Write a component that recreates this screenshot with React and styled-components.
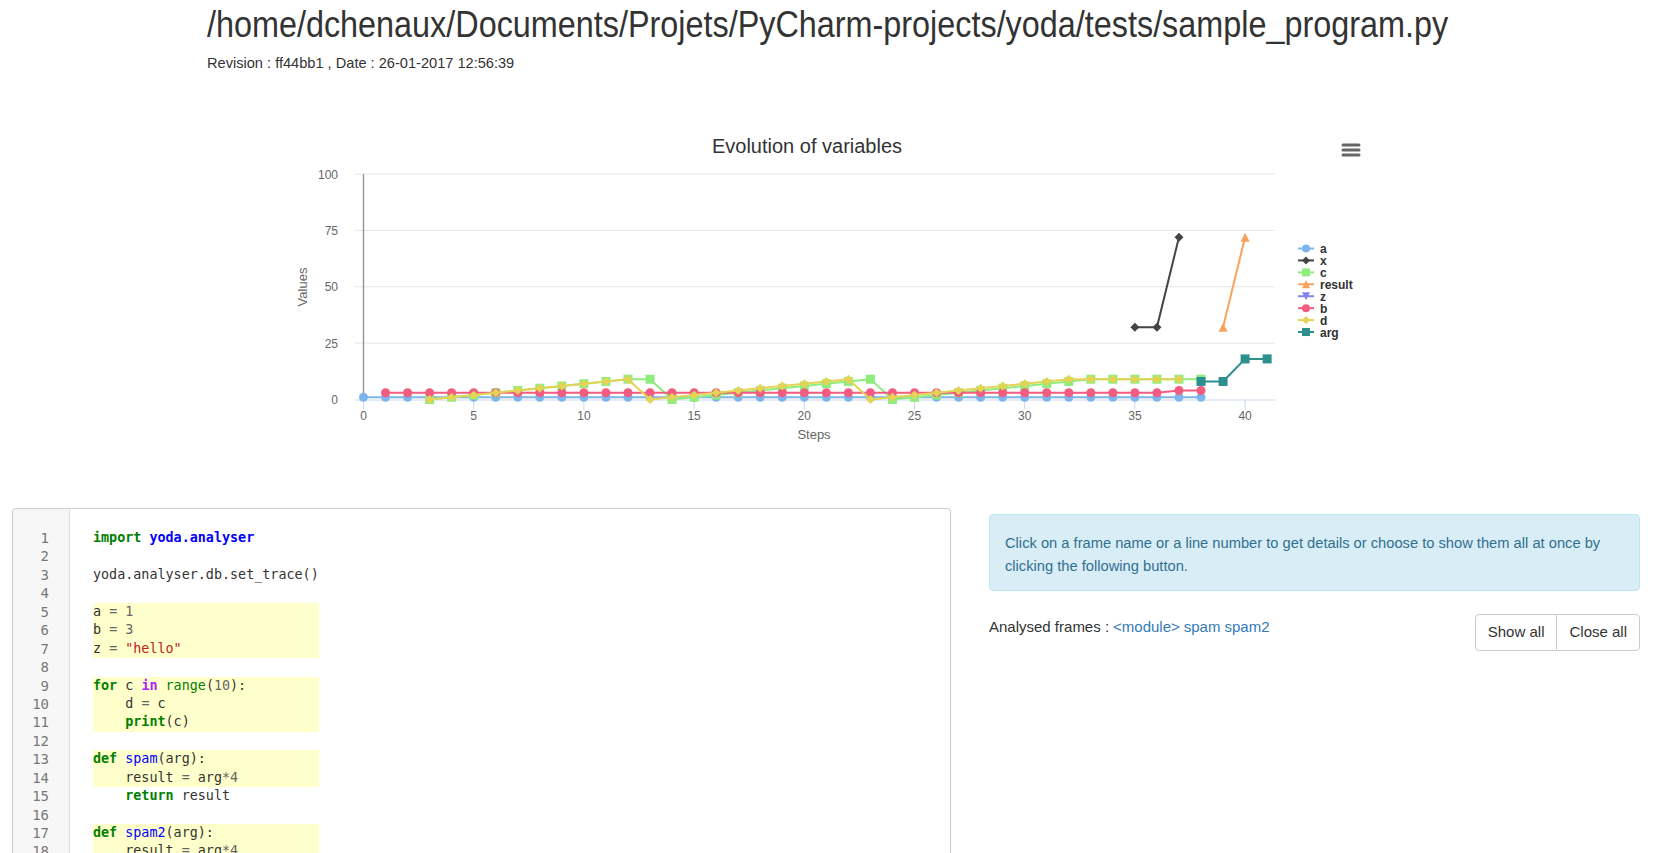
import React from 'react';
import styled, { createGlobalStyle } from 'styled-components';

const GlobalStyle = createGlobalStyle`
  html, body {
    margin: 0;
    padding: 0;
    overflow: hidden;
    background: #fff;
  }
  body {
    font-family: "Liberation Sans", Arial, sans-serif;
    font-size: 15px;
    line-height: 1.5;
    color: #333;
  }
`;

const Page = styled.div`
  width: 1658px;
`;

const Header = styled.header`
  padding: 3px 0 0 207px;
`;

// the original title face is a condensed sans, squeeze the regular one to the same width
const Title = styled.h1`
  display: inline-block;
  margin: 0;
  font-size: 37.5px;
  line-height: 42px;
  font-weight: 400;
  white-space: nowrap;
  color: #333;
  transform: scaleX(0.863);
  transform-origin: left center;
`;

const Revision = styled.p`
  margin: 8px 0 0;
  font-size: 14.6px;
  line-height: 20px;
`;

const ChartWrap = styled.div`
  margin-top: 37px;
  padding-left: 242px;
  height: 350px;
  svg {
    display: block;
    font-family: "Liberation Sans", Arial, sans-serif;
  }
`;

const Columns = styled.div`
  display: flex;
  align-items: flex-start;
  margin-top: 48px;
  padding: 0 18px 0 12px;
`;

const CodeBox = styled.div`
  display: flex;
  width: 939px;
  box-sizing: border-box;
  border: 1px solid #ccc;
  border-bottom: none;
  border-radius: 4px 4px 0 0;
  background: #fff;
  font-family: "DejaVu Sans Mono", monospace;
  font-size: 13.4px;
  line-height: 18.45px;
`;

const Gutter = styled.div`
  width: 57px;
  box-sizing: border-box;
  padding: 20px 20px 40px 0;
  background: #f7f7f7;
  border-right: 1px solid #ddd;
  border-radius: 4px 0 0 0;
  text-align: right;
  font-size: 14px;
  color: #777;
`;

const LineNo = styled.div`
  height: 18.45px;
`;

const Source = styled.div`
  padding: 20px 20px 40px 23px;
`;

const Pre = styled.div`
  display: inline-block;
  white-space: pre;
  color: #333;
`;

const Line = styled.div`
  height: 18.45px;
  background: ${(p) => (p.$hl ? '#ffffcc' : 'transparent')};
`;

const tokenStyles = {
  k: 'color: #008000; font-weight: bold;',
  nn: 'color: #0000ff; font-weight: bold;',
  ow: 'color: #aa22ff; font-weight: bold;',
  nb: 'color: #008000;',
  nf: 'color: #0000ff;',
  mi: 'color: #666666;',
  o: 'color: #666666;',
  s: 'color: #ba2121;',
};

const Tok = styled.span`
  ${(p) => tokenStyles[p.$kind] || ''}
`;

const Side = styled.div`
  flex: 1;
  margin-left: 38px;
  margin-top: 6px;
`;

const Alert = styled.div`
  padding: 17px 15px 13px;
  border: 1px solid #bce8f1;
  border-radius: 4px;
  background: #d9edf7;
  color: #31708f;
  font-size: 14.7px;
  line-height: 22.5px;
`;

const FramesRow = styled.div`
  display: flex;
  justify-content: space-between;
  align-items: flex-start;
  margin-top: 23px;
`;

const Frames = styled.div`
  padding-top: 2px;
  a {
    color: #337ab7;
    text-decoration: none;
    margin-left: 4px;
  }
`;

const BtnGroup = styled.div`
  display: flex;
`;

const Btn = styled.button`
  font-family: "Liberation Sans", Arial, sans-serif;
  font-size: 15px;
  line-height: 22.5px;
  padding: 6px 12px;
  color: #333;
  background: #fff;
  border: 1px solid #ccc;
  border-radius: ${(p) => (p.$first ? '4px 0 0 4px' : '0 4px 4px 0')};
  margin-left: ${(p) => (p.$first ? '0' : '-1px')};
`;

// code listing, each line is a list of [kind, text] tokens
const code = [
  [['k', 'import'], ['', ' '], ['nn', 'yoda.analyser']],
  [],
  [['', 'yoda.analyser.db.set_trace()']],
  [],
  [['', 'a '], ['o', '='], ['', ' '], ['mi', '1']],
  [['', 'b '], ['o', '='], ['', ' '], ['mi', '3']],
  [['', 'z '], ['o', '='], ['', ' '], ['s', '"hello"']],
  [],
  [['k', 'for'], ['', ' c '], ['ow', 'in'], ['', ' '], ['nb', 'range'], ['', '('], ['mi', '10'], ['', '):']],
  [['', '    d '], ['o', '='], ['', ' c']],
  [['', '    '], ['k', 'print'], ['', '(c)']],
  [],
  [['k', 'def'], ['', ' '], ['nf', 'spam'], ['', '(arg):']],
  [['', '    result '], ['o', '='], ['', ' arg'], ['o', '*'], ['mi', '4']],
  [['', '    '], ['k', 'return'], ['', ' result']],
  [],
  [['k', 'def'], ['', ' '], ['nf', 'spam2'], ['', '(arg):']],
  [['', '    result '], ['o', '='], ['', ' arg'], ['o', '*'], ['mi', '4']],
  [['', '    '], ['k', 'return'], ['', ' result']],
  [],
  [['', 'x '], ['o', '='], ['', ' spam('], ['mi', '8'], ['', ')']],
  [['', 'x '], ['o', '='], ['', ' spam2(x'], ['o', '-'], ['mi', '14'], ['', ')']],
];

const highlighted = new Set([5, 6, 7, 9, 10, 11, 13, 14, 17, 18, 21, 22]);

// chart geometry (svg coordinates)
const X0 = 121.5;
const STEP = 22.04;
const Y0 = 289.5;
const UNIT = 2.255;
const px = (s) => X0 + s * STEP;
const py = (v) => Y0 - v * UNIT;

const range = (a, b) => Array.from({ length: b - a + 1 }, (_, i) => a + i);

const series = [
  { name: 'a', color: '#7cb5ec', symbol: 'circle', data: range(0, 38).map((s) => [s, 1]) },
  { name: 'x', color: '#434348', symbol: 'diamond', data: [[35, 32], [36, 32], [37, 72]] },
  {
    name: 'c',
    color: '#90ed7d',
    symbol: 'square',
    data: [
      ...range(3, 12).map((s) => [s, s - 3]),
      [13, 9],
      ...range(14, 23).map((s) => [s, s - 14]),
      ...range(24, 33).map((s) => [s, s - 24]),
      ...range(34, 38).map((s) => [s, 9]),
    ],
  },
  { name: 'result', color: '#f7a35c', symbol: 'triangle', data: [[39, 32], [40, 72]] },
  { name: 'z', color: '#8085e9', symbol: 'triangle-down', data: [] },
  {
    name: 'b',
    color: '#f15c80',
    symbol: 'circle',
    data: [...range(1, 36).map((s) => [s, 3]), [37, 4], [38, 4]],
  },
  {
    name: 'd',
    color: '#e4d354',
    symbol: 'diamond',
    data: [
      ...range(3, 12).map((s) => [s, s - 3]),
      ...range(13, 22).map((s) => [s, s - 13]),
      ...range(23, 32).map((s) => [s, s - 23]),
      ...range(33, 37).map((s) => [s, 9]),
    ],
  },
  { name: 'arg', color: '#2b908f', symbol: 'square', data: [[38, 8], [39, 8], [40, 18], [41, 18]] },
];

const Marker = ({ symbol, x, y, color, r = 4.5 }) => {
  if (symbol === 'circle') return <circle cx={x} cy={y} r={r} fill={color} />;
  if (symbol === 'square') return <rect x={x - r} y={y - r} width={r * 2} height={r * 2} fill={color} />;
  if (symbol === 'diamond')
    return <path d={`M${x} ${y - r}L${x + r} ${y}L${x} ${y + r}L${x - r} ${y}Z`} fill={color} />;
  if (symbol === 'triangle')
    return <path d={`M${x} ${y - r}L${x + r} ${y + r}L${x - r} ${y + r}Z`} fill={color} />;
  return <path d={`M${x - r} ${y - r}L${x + r} ${y - r}L${x} ${y + r}Z`} fill={color} />;
};

const Chart = () => (
  <svg width="1130" height="350" viewBox="0 0 1130 350">
    <text x="565" y="43" textAnchor="middle" fontSize="20" fill="#333">
      Evolution of variables
    </text>
    <g stroke="#666" strokeWidth="3" strokeLinecap="round">
      <line x1="1101" y1="35" x2="1117" y2="35" />
      <line x1="1101" y1="40" x2="1117" y2="40" />
      <line x1="1101" y1="45" x2="1117" y2="45" />
    </g>
    {[25, 50, 75, 100].map((v) => (
      <line key={v} x1="113" x2="1033" y1={py(v)} y2={py(v)} stroke="#e6e6e6" />
    ))}
    {[0, 25, 50, 75, 100].map((v) => (
      <text key={v} x="96" y={py(v) + 4.5} textAnchor="end" fontSize="12" fill="#666">
        {v}
      </text>
    ))}
    <text x="65" y="177" transform="rotate(-90 65 177)" textAnchor="middle" fontSize="13" fill="#666">
      Values
    </text>
    <line x1="113" x2="1033" y1={Y0 + 0.5} y2={Y0 + 0.5} stroke="#ccd6eb" />
    {range(0, 8).map((i) => (
      <g key={i}>
        <line x1={px(i * 5)} x2={px(i * 5)} y1={Y0} y2={Y0 + 10} stroke="#ccd6eb" />
        <text x={px(i * 5)} y="310" textAnchor="middle" fontSize="12" fill="#666">
          {i * 5}
        </text>
      </g>
    ))}
    <text x="572" y="329" textAnchor="middle" fontSize="13" fill="#666">
      Steps
    </text>
    <line x1={X0} x2={X0} y1={py(100)} y2={Y0} stroke="#999" strokeWidth="1.5" />
    {series.map((s) => (
      <g key={s.name}>
        {s.data.length > 1 && (
          <polyline
            points={s.data.map(([x, v]) => `${px(x)},${py(v)}`).join(' ')}
            fill="none"
            stroke={s.color}
            strokeWidth="2"
            strokeLinejoin="round"
          />
        )}
        {s.data.map(([x, v]) => (
          <Marker key={x} symbol={s.symbol} x={px(x)} y={py(v)} color={s.color} />
        ))}
      </g>
    ))}
    {series.map((s, i) => {
      const y = 138.5 + i * 11.93;
      return (
        <g key={s.name}>
          <line x1="1056" x2="1072" y1={y} y2={y} stroke={s.color} strokeWidth="2" />
          <Marker symbol={s.symbol} x={1064} y={y} color={s.color} r={4} />
          <text x="1078" y={y + 4.5} fontSize="12" fontWeight="bold" fill="#333">
            {s.name}
          </text>
        </g>
      );
    })}
  </svg>
);

const App = () => (
  <Page>
    <GlobalStyle />
    <Header>
      <Title>/home/dchenaux/Documents/Projets/PyCharm-projects/yoda/tests/sample_program.py</Title>
      <Revision>Revision : ff44bb1 , Date : 26-01-2017 12:56:39</Revision>
    </Header>
    <ChartWrap>
      <Chart />
    </ChartWrap>
    <Columns>
      <CodeBox>
        <Gutter>
          {code.map((_, i) => (
            <LineNo key={i}>{i + 1}</LineNo>
          ))}
        </Gutter>
        <Source>
          <Pre>
            {code.map((tokens, i) => (
              <Line key={i} $hl={highlighted.has(i + 1)}>
                {tokens.map(([kind, text], j) => (
                  <Tok key={j} $kind={kind}>
                    {text}
                  </Tok>
                ))}
              </Line>
            ))}
          </Pre>
        </Source>
      </CodeBox>
      <Side>
        <Alert>
          Click on a frame name or a line number to get details or choose to show them all at once by
          clicking the following button.
        </Alert>
        <FramesRow>
          <Frames>
            Analysed frames :
            <a href="#module">&lt;module&gt;</a>
            <a href="#spam">spam</a>
            <a href="#spam2">spam2</a>
          </Frames>
          <BtnGroup>
            <Btn $first>Show all</Btn>
            <Btn>Close all</Btn>
          </BtnGroup>
        </FramesRow>
      </Side>
    </Columns>
  </Page>
);

export default App;
